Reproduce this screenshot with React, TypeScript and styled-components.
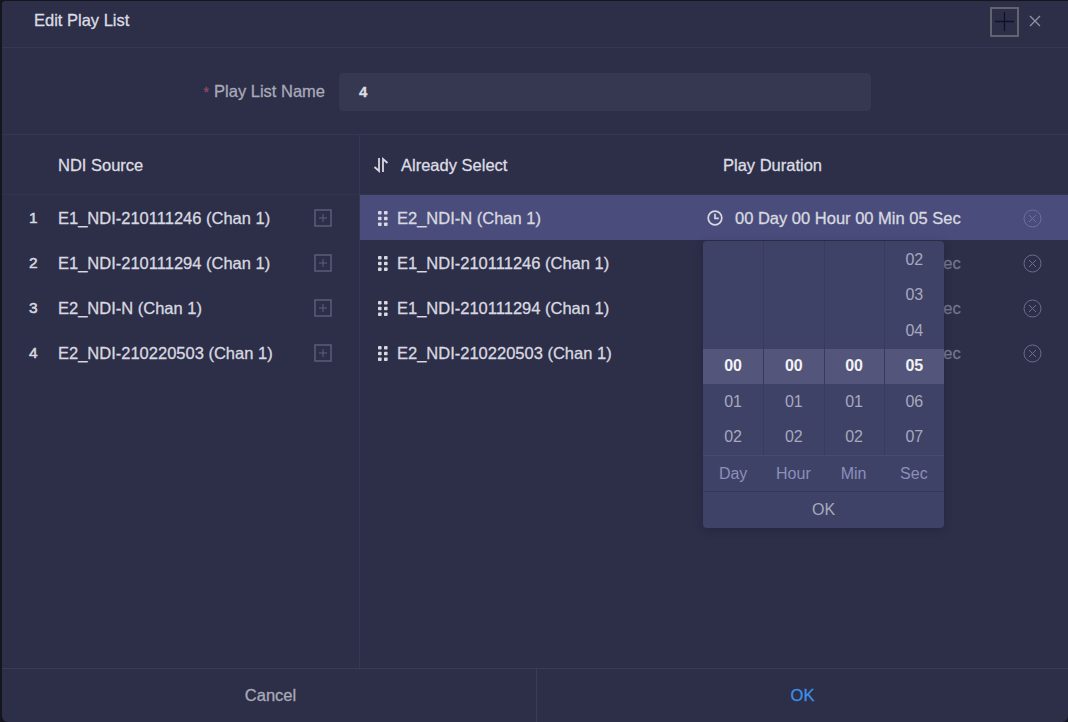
import React from "react";
import styled, { createGlobalStyle } from "styled-components";

const Global = createGlobalStyle`
  html, body { margin: 0; padding: 0; width: 1068px; height: 722px; overflow: hidden; background: #15151d; }
  body { font-family: "Liberation Sans", Arial, sans-serif; }
  #root { width: 1068px; height: 722px; }
`;

const Dialog = styled.div`
  width: 1066px; height: 721px; margin: 1px 0 0 2px; background: #2d2e47; color: #d3d4dc;
  border-radius: 3px 0 6px 6px; display: flex; flex-direction: column; position: relative; overflow: hidden;
  font-size: 16.5px; letter-spacing: 0; -webkit-text-stroke: 0.3px;
`;
const Header = styled.header`
  height: 46px; flex: none; display: flex; align-items: center; padding: 0 27px 0 32px;
  border-bottom: 1px solid #363853; color: #dcdde3;
`;
const Title = styled.div`
  flex: 1; margin-top: -8px;
`;
const DebugBox = styled.div`
  width: 29px; height: 30px; border: 2px solid #62636f; box-sizing: border-box; margin-right: 10px; margin-top: -5px;
  display: flex; align-items: center; justify-content: center; color: #10122a;
`;
const CloseBtn = styled.div`
  display: flex; color: #9294a6; margin-top: -7px;
`;
const NameRow = styled.div`
  height: 87px; flex: none; display: flex; align-items: center; border-bottom: 1px solid #363853; box-sizing: border-box;
`;
const NameLabel = styled.label`
  width: 323px; text-align: right; color: #a9aab8; margin-right: 14px;
`;
const Star = styled.span`
  color: #8d4f64; margin-right: 5px; font-size: 14px;
`;
const NameInput = styled.div`
  width: 532px; height: 38px; background: #353850; border-radius: 4px; display: flex; align-items: center;
  padding-left: 20px; box-sizing: border-box; font-weight: 700; font-size: 15px; color: #dcdde3; margin-top: 1px;
`;
const Body = styled.div`
  flex: 1; display: flex; min-height: 0;
`;
const LeftPane = styled.section`
  width: 357px; flex: none; border-right: 1px solid #363853;
`;
const RightPane = styled.section`
  flex: 1; min-width: 0;
`;
const PaneHead = styled.div`
  height: 60px; padding-top: 1px; display: flex; align-items: center; border-bottom: 1px solid #33354f; box-sizing: border-box; color: #dcdde3;
`;
const LeftHeadLabel = styled.span`
  margin-left: 56px;
`;
const SortIcon = styled.span`
  display: flex; margin: 0 12px 0 13px; color: #d8d9e0;
`;
const AlreadyLabel = styled.span`
  width: 322px;
`;
const SourceRow = styled.div`
  height: 45px; padding-top: 1px; box-sizing: border-box; display: flex; align-items: center; color: #d8d9e0;
`;
const Index = styled.span`
  width: 56px; padding-left: 27px; box-sizing: border-box; font-size: 15.5px; -webkit-text-stroke: 0.5px;
`;
const SourceName = styled.span`
  width: 256px; white-space: nowrap;
`;
const AddIcon = styled.span`
  display: flex;
`;
const SelectRow = styled.div<{ $active?: boolean }>`
  height: 45px; padding-top: 1px; box-sizing: border-box; display: flex; align-items: center;
  background: ${p => (p.$active ? "#4a4d7b" : "transparent")};
  color: #d8d9e0;
`;
const Grip = styled.span`
  display: flex; margin: 0 8px 0 17px;
`;
const SelectName = styled.span`
  width: 310px; white-space: nowrap;
`;
const ClockSlot = styled.span`
  display: flex; width: 28px;
`;
const Duration = styled.span<{ $dim?: boolean }>`
  width: 288px; white-space: nowrap; color: ${p => (p.$dim ? "#73758d" : "#d8d9e0")};
`;
const Remove = styled.span<{ $dim?: boolean }>`
  display: flex; color: ${p => (p.$dim ? "#6c6e8e" : "#6d70a0")};
`;
const Footer = styled.footer`
  height: 53px; flex: none; display: flex; border-top: 1px solid #3a3c56;
`;
const FootBtn = styled.div<{ $primary?: boolean }>`
  display: flex; align-items: center; justify-content: center; color: ${p => (p.$primary ? "#3f8fe6" : "#a9aab8")};
  width: 534px; box-sizing: border-box; padding-left: ${p => (p.$primary ? "0" : "3px")};
  flex: ${p => (p.$primary ? "1" : "none")};
  border-left: ${p => (p.$primary ? "1px solid #3a3c56" : "none")};
`;

const Picker = styled.div`
  position: absolute; left: 701px; top: 240px; width: 241px; height: 287px; background: #3f4267;
  border-radius: 4px; display: flex; flex-direction: column; overflow: hidden; box-shadow: 0 2px 8px rgba(20,20,40,.25);
`;
const Columns = styled.div`
  display: grid; grid-template-columns: repeat(4, 1fr); height: 214px; flex: none; position: relative;
`;
const Column = styled.div`
  display: flex; flex-direction: column; justify-content: flex-end; border-left: 1px solid #383b5c;
  &:first-child { border-left: none; }
`;
const Tick = styled.div<{ $on?: boolean }>`
  height: 35.5px; flex: none; display: flex; align-items: center; justify-content: center;
  background: ${p => (p.$on ? "#53567a" : "transparent")};
  color: ${p => (p.$on ? "#f2f2f6" : "#a7a9bd")}; font-weight: ${p => (p.$on ? 700 : 400)};
  font-size: 16px; -webkit-text-stroke: 0;
`;
const Units = styled.div`
  display: grid; grid-template-columns: repeat(4, 1fr); height: 36px; flex: none; border-top: 1px solid #484b6e;
  box-sizing: border-box; color: #8b8fbc; font-size: 16px; -webkit-text-stroke: 0;
`;
const Unit = styled.span`
  display: flex; align-items: center; justify-content: center;
`;
const PickerOk = styled.div`
  flex: 1; display: flex; align-items: center; justify-content: center; border-top: 1px solid #363858; color: #a7a9bd; font-size: 16px; -webkit-text-stroke: 0;
`;

const Plus = () => (
  <svg width="18" height="18" viewBox="0 0 18 18" fill="none" stroke="#5f617c" strokeWidth="1.4">
    <rect x="1" y="1" width="16" height="16" />
    <path d="M9 5v8M5 9h8" strokeWidth="1" />
  </svg>
);
const Dots = () => (
  <svg width="12" height="17" viewBox="0 0 12 17" fill="#d8d9e0">
    {[1, 6.7, 12.4].map(y => (
      <React.Fragment key={y}>
        <rect x="1" y={y} width="3.6" height="3.6" rx="0.8" />
        <rect x="7" y={y} width="3.6" height="3.6" rx="0.8" />
      </React.Fragment>
    ))}
  </svg>
);
const Clock = () => (
  <svg width="16" height="16" viewBox="0 0 16 16" fill="none" stroke="#d8d9e0" strokeWidth="1.7">
    <circle cx="8" cy="8" r="6.8" />
    <path d="M8 3.8v4.6h3.8" />
  </svg>
);
const RemoveIcon = () => (
  <svg width="19" height="19" viewBox="0 0 19 19" fill="none" stroke="currentColor" strokeWidth="1">
    <circle cx="9.5" cy="9.5" r="8.5" />
    <path d="M6 6l7 7M13 6l-7 7" />
  </svg>
);
const Sort = () => (
  <svg width="16" height="16" viewBox="0 0 16 16" fill="none" stroke="currentColor" strokeWidth="1.8">
    <path d="M6 1v13L1.5 10M10 15V2l4.5 4" />
  </svg>
);

const sources = ["E1_NDI-210111246 (Chan 1)", "E1_NDI-210111294 (Chan 1)", "E2_NDI-N (Chan 1)", "E2_NDI-210220503 (Chan 1)"];
const selected = ["E2_NDI-N (Chan 1)", "E1_NDI-210111246 (Chan 1)", "E1_NDI-210111294 (Chan 1)", "E2_NDI-210220503 (Chan 1)"];
const pickerColumns = [
  { unit: "Day", ticks: ["00", "01", "02"] },
  { unit: "Hour", ticks: ["00", "01", "02"] },
  { unit: "Min", ticks: ["00", "01", "02"] },
  { unit: "Sec", ticks: ["02", "03", "04", "05", "06", "07"] },
];

export default function App() {
  return (
    <>
      <Global />
      <Dialog>
        <Header>
          <Title>Edit Play List</Title>
          <DebugBox>
            <svg width="21" height="21" viewBox="0 0 21 21" stroke="currentColor" strokeWidth="1.4"><path d="M10.5 1v19M1 10.5h19" /></svg>
          </DebugBox>
          <CloseBtn>
            <svg width="12" height="12" viewBox="0 0 12 12" stroke="currentColor" strokeWidth="1.3"><path d="M1 1l10 10M11 1L1 11" /></svg>
          </CloseBtn>
        </Header>
        <NameRow>
          <NameLabel><Star>*</Star>Play List Name</NameLabel>
          <NameInput>4</NameInput>
        </NameRow>
        <Body>
          <LeftPane>
            <PaneHead><LeftHeadLabel>NDI Source</LeftHeadLabel></PaneHead>
            {sources.map((s, i) => (
              <SourceRow key={s}>
                <Index>{i + 1}</Index>
                <SourceName>{s}</SourceName>
                <AddIcon><Plus /></AddIcon>
              </SourceRow>
            ))}
          </LeftPane>
          <RightPane>
            <PaneHead>
              <SortIcon><Sort /></SortIcon>
              <AlreadyLabel>Already Select</AlreadyLabel>
              <span>Play Duration</span>
            </PaneHead>
            {selected.map((s, i) => (
              <SelectRow key={s} $active={i === 0}>
                <Grip><Dots /></Grip>
                <SelectName>{s}</SelectName>
                <ClockSlot>{i === 0 && <Clock />}</ClockSlot>
                <Duration $dim={i > 0}>00 Day 00 Hour 00 Min 05 Sec</Duration>
                <Remove $dim={i > 0}><RemoveIcon /></Remove>
              </SelectRow>
            ))}
          </RightPane>
        </Body>
        <Footer>
          <FootBtn>Cancel</FootBtn>
          <FootBtn $primary>OK</FootBtn>
        </Footer>
        <Picker>
          <Columns>
            {pickerColumns.map(c => (
              <Column key={c.unit}>
                {c.ticks.map(t => (
                  <Tick key={t} $on={t === (c.unit === "Sec" ? "05" : "00")}>{t}</Tick>
                ))}
              </Column>
            ))}
          </Columns>
          <Units>
            {pickerColumns.map(c => <Unit key={c.unit}>{c.unit}</Unit>)}
          </Units>
          <PickerOk>OK</PickerOk>
        </Picker>
      </Dialog>
    </>
  );
}
